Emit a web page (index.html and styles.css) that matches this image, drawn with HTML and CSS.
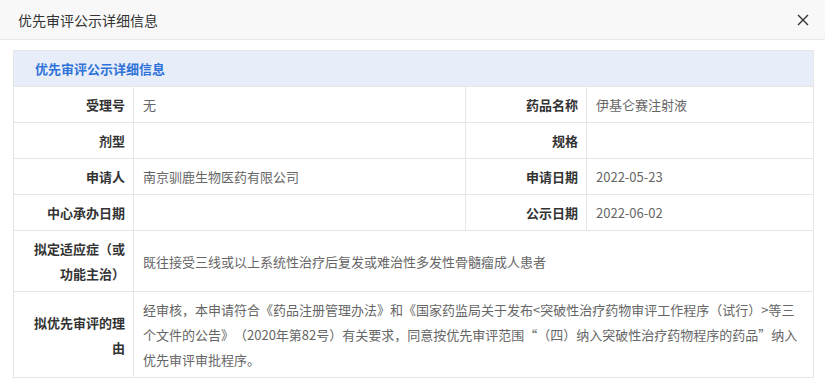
FILE: index.html
```html
<!DOCTYPE html>
<html lang="zh-CN">
<head>
<meta charset="utf-8">
<link rel="stylesheet" href="styles.css">
</head>
<body>
<div class="dialog">
  <div class="dialog-header">
    <span class="dialog-title">优先审评公示详细信息</span>
    <span class="close" aria-label="关闭">
      <svg width="12" height="12" viewBox="0 0 12 12"><path d="M1 1L11 11M11 1L1 11" stroke="#333" stroke-width="1.4" fill="none"/></svg>
    </span>
  </div>
  <table class="info">
    <colgroup>
      <col class="c1"><col class="c2"><col class="c3"><col class="c4">
    </colgroup>
    <tr><th colspan="4" class="caption">优先审评公示详细信息</th></tr>
    <tr><td class="lbl">受理号</td><td class="val">无</td><td class="lbl">药品名称</td><td class="val">伊基仑赛注射液</td></tr>
    <tr><td class="lbl">剂型</td><td class="val"></td><td class="lbl">规格</td><td class="val"></td></tr>
    <tr><td class="lbl">申请人</td><td class="val">南京驯鹿生物医药有限公司</td><td class="lbl">申请日期</td><td class="val">2022-05-23</td></tr>
    <tr><td class="lbl">中心承办日期</td><td class="val"></td><td class="lbl">公示日期</td><td class="val">2022-06-02</td></tr>
    <tr><td class="lbl">拟定适应症（或功能主治）</td><td class="val" colspan="3">既往接受三线或以上系统性治疗后复发或难治性多发性骨髓瘤成人患者</td></tr>
    <tr><td class="lbl">拟优先审评的理由</td><td class="val" colspan="3">经审核，本申请符合《药品注册管理办法》和《国家药监局关于发布&lt;突破性治疗药物审评工作程序（试行）&gt;等三个文件的公告》（2020年第82号）有关要求，同意按优先审评范围“（四）纳入突破性治疗药物程序的药品”纳入优先审评审批程序。</td></tr>
  </table>
</div>
</body>
</html>
```

FILE: styles.css
```css
html, body {
  margin: 0;
  padding: 0;
  background: #fff;
}
body {
  font-family: "Noto Sans CJK SC", "Microsoft YaHei", sans-serif;
  font-size: 13px;
  color: #333;
  text-spacing-trim: space-all;
}
.dialog-header {
  height: 39px;
  background: #f8f8f8;
  border-bottom: 1px solid #e8e8e8;
  display: flex;
  align-items: center;
  justify-content: space-between;
  padding: 0 16px 0 18px;
}
.dialog-title {
  font-size: 14px;
  color: #333;
}
.close {
  display: flex;
  width: 12px;
  height: 12px;
}
.info {
  margin: 10px 0 0 13px;
  width: 800px;
  border-collapse: collapse;
  table-layout: fixed;
}
.c1 { width: 120px; }
.c2 { width: 332px; }
.c3 { width: 121px; }
.c4 { width: 227px; }
.info th, .info td {
  border: 1px solid #e6e6e6;
  line-height: 25px;
  padding: 5px 9px;
  vertical-align: middle;
}
.info th.caption {
  background: #e7eefa;
  color: #2f72d8;
  font-weight: bold;
  text-align: left;
  padding: 5px 21px;
  line-height: 25px;
}
.lbl {
  text-align: right;
  font-weight: bold;
  color: #333;
  padding-right: 8px !important;
}
.val {
  text-align: left;
  color: #666;
}
```
